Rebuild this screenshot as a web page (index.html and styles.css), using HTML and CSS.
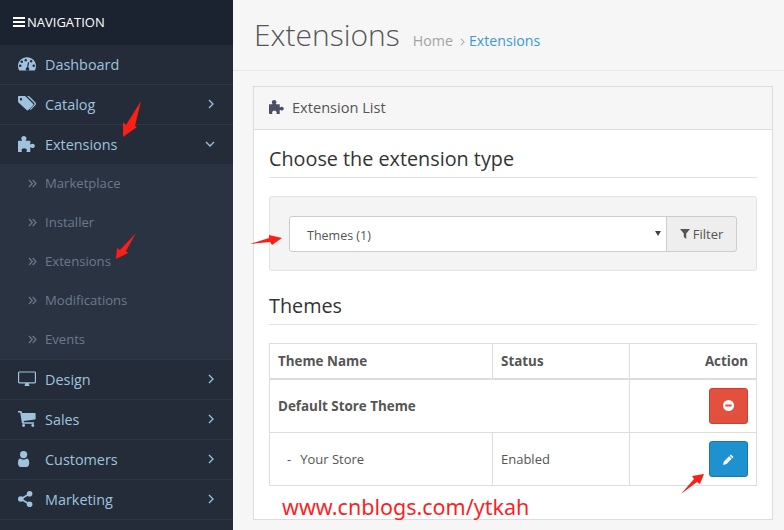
FILE: index.html
```html
<!DOCTYPE html>
<html lang="en">
<head>
  <meta charset="UTF-8">
  <meta name="viewport" content="width=device-width, initial-scale=1.0">
  <title>Extensions</title>
  <link rel="stylesheet" href="styles.css">
</head>
<body>
  <svg class="sprites" width="0" height="0">
    <symbol id="i-dash" viewBox="0 0 24 18"><path fill-rule="evenodd" d="M12 0C5.400 0 0 5.200 0 11.700c0 2.200.6 4.300 1.700 6.100h20.600c1.100-1.800 1.700-3.900 1.700-6.100C24 5.200 18.600 0 12 0zM5 4.200a1.700 1.700 0 1 1 0 3.400 1.700 1.700 0 0 1 0-3.400zM3 9.600a1.700 1.700 0 1 1 0 3.400 1.700 1.700 0 0 1 0-3.400zM10.300 2.200a1.700 1.700 0 1 1 0 3.400 1.700 1.700 0 0 1 0-3.400zM17.500 3.600a1.700 1.700 0 1 1 0 3.400 1.700 1.700 0 0 1 0-3.400zM21 9.600a1.700 1.700 0 1 1 0 3.400 1.700 1.700 0 0 1 0-3.400zM13.300 6.500l1.700.5-1.400 6.300a2.400 2.400 0 1 1-3.200 1.500c.3-.8 1-1.300 1.700-1.500z"/></symbol>
    <symbol id="i-tags" viewBox="0 0 18 16" preserveAspectRatio="xMinYMid"><path fill-rule="evenodd" d="M1 0h5.500c.6 0 1.100.3 1.500.7l7 7c.5.500.5 1.300 0 1.800l-4.600 4.600c-.5.500-1.300.5-1.800 0l-7.900-7.400C.3 6.300 0 5.800 0 5.200V1C0 .4.400 0 1 0zM3 2a1.200 1.200 0 1 0 0 2.400A1.200 1.200 0 0 0 3 2z"/><path d="M9 0h1.200c.5 0 1 .2 1.400.6l5.900 6c.7.7.7 1.800 0 2.500l-4.800 4.900-.8-.8 4.400-4.500c.4-.4.4-1 0-1.400z"/></symbol>
    <symbol id="i-puzzle" viewBox="0 0 16 15" preserveAspectRatio="xMinYMid"><path d="M.5 4.500h2.800c.5 0 .6-.4.300-.8-.3-.4-.6-.8-.6-1.400C3 1 4.200 0 5.500 0S8 1 8 2.300c0 .6-.3 1-.6 1.400-.3.400-.2.8.3.8h3.800v3c0 .5.400.6.800.3.300-.3.700-.5 1.200-.5 1.200 0 2.300.8 2.300 2s-1.100 2-2.300 2c-.5 0-.9-.2-1.200-.5-.4-.3-.8-.2-.8.3V15H8.300c-.4 0-.5-.4-.3-.7.200-.3.300-.6.300-1 0-1.100-1.300-1.800-2.500-1.800s-2.500.7-2.500 1.800c0 .4.100.7.300 1 .2.300.1.700-.3.700H.5c-.3 0-.5-.2-.5-.5V5c0-.3.200-.5.500-.5z"/></symbol>
    <symbol id="i-desktop" viewBox="0 0 26 22"><path fill-rule="evenodd" d="M2 0h22c1.100 0 2 .9 2 2v13.500c0 1.100-.9 2-2 2h-8.500c0 1.200.5 2 1 2.500v1H9.500v-1c.5-.5 1-1.300 1-2.500H2c-1.100 0-2-.9-2-2V2C0 .9.900 0 2 0zM1.700 1.700v14h22.600v-14z"/></symbol>
    <symbol id="i-cart" viewBox="0 0 22 20" preserveAspectRatio="xMinYMid"><path d="M0 0h3.700c.6 0 1 .4 1.100 1l.3 1.500H21c.6 0 1 .4 1 1v6.200c0 .5-.4.900-.9 1L7 12.400l.4 1.600H20v2H6c-.6 0-1-.4-1.100-1L2.800 2H0z"/><circle cx="7" cy="18.200" r="1.800"/><circle cx="18.500" cy="18.200" r="1.800"/></symbol>
    <symbol id="i-user" viewBox="0 0 14 20" preserveAspectRatio="xMinYMid"><circle cx="7" cy="4.500" r="4.500"/><path d="M3 9.500c1 .8 2.500 1.300 4 1.300s3-.5 4-1.300c2 .2 3 1.900 3 5.500 0 3-1.500 5-3.500 5h-7C1.500 20 0 18 0 15c0-3.600 1-5.300 3-5.500z"/></symbol>
    <symbol id="i-share" viewBox="0 0 18 20" preserveAspectRatio="xMinYMid"><circle cx="14.500" cy="3.500" r="3.500"/><circle cx="14.500" cy="16.500" r="3.500"/><circle cx="3.500" cy="10" r="3.500"/><path d="M3 9l11-6.500 1 1.800-11 6.500zM3 11l1-1.800 11 6.500-1 1.800z"/></symbol>
    <symbol id="i-right" viewBox="0 0 6 10"><path d="M1 1l4 4-4 4" fill="none" stroke="currentColor" stroke-width="1.300"/></symbol>
    <symbol id="i-down" viewBox="0 0 10 6"><path d="M1 1l4 4 4-4" fill="none" stroke="currentColor" stroke-width="1.300"/></symbol>
    <symbol id="i-dbl" viewBox="0 0 9 9"><path d="M1 1l3.300 3.500L1 8M4.700 1L8 4.500 4.700 8" fill="none" stroke="currentColor" stroke-width="1.200"/></symbol>
  </svg>

  <div class="app">
    <nav class="sidebar">
      <div class="nav-head">
        <svg class="bars" viewBox="0 0 12 10"><path d="M0 0h12v2H0zM0 4h12v2H0zM0 8h12v2H0z"/></svg>
        <span>NAVIGATION</span>
      </div>
      <a class="nav-item"><svg class="nav-icon"><use href="#i-dash"/></svg><span class="nav-label">Dashboard</span></a>
      <a class="nav-item"><svg class="nav-icon"><use href="#i-tags"/></svg><span class="nav-label">Catalog</span><svg class="caret"><use href="#i-right"/></svg></a>
      <a class="nav-item open"><svg class="nav-icon"><use href="#i-puzzle"/></svg><span class="nav-label">Extensions</span><svg class="caret wide"><use href="#i-down"/></svg></a>
      <div class="submenu">
        <a class="sub-item"><svg class="dbl"><use href="#i-dbl"/></svg>Marketplace</a>
        <a class="sub-item"><svg class="dbl"><use href="#i-dbl"/></svg>Installer</a>
        <a class="sub-item"><svg class="dbl"><use href="#i-dbl"/></svg>Extensions</a>
        <a class="sub-item"><svg class="dbl"><use href="#i-dbl"/></svg>Modifications</a>
        <a class="sub-item"><svg class="dbl"><use href="#i-dbl"/></svg>Events</a>
      </div>
      <a class="nav-item"><svg class="nav-icon"><use href="#i-desktop"/></svg><span class="nav-label">Design</span><svg class="caret"><use href="#i-right"/></svg></a>
      <a class="nav-item"><svg class="nav-icon"><use href="#i-cart"/></svg><span class="nav-label">Sales</span><svg class="caret"><use href="#i-right"/></svg></a>
      <a class="nav-item"><svg class="nav-icon"><use href="#i-user"/></svg><span class="nav-label">Customers</span><svg class="caret"><use href="#i-right"/></svg></a>
      <a class="nav-item"><svg class="nav-icon"><use href="#i-share"/></svg><span class="nav-label">Marketing</span><svg class="caret"><use href="#i-right"/></svg></a>
    </nav>

    <main class="content">
      <header class="page-head">
        <h1>Extensions</h1>
        <span class="crumb">Home</span>
        <svg class="crumb-sep"><use href="#i-right"/></svg>
        <span class="crumb current">Extensions</span>
      </header>

      <section class="panel">
        <div class="panel-head">
          <svg class="panel-icon"><use href="#i-puzzle"/></svg>
          <span>Extension List</span>
        </div>
        <div class="panel-body">
          <h2>Choose the extension type</h2>
          <div class="well">
            <div class="select-wrap">
              <select class="type-select"><option>Themes (1)</option></select>
            </div>
            <button class="filter-btn" type="button">
              <svg class="funnel" viewBox="0 0 12 12"><path d="M0 0h12L7.500 5.500V12L4.500 9.500v-4z"/></svg>Filter
            </button>
          </div>
          <h2 class="second">Themes</h2>
          <table class="themes">
            <thead>
              <tr><th class="col-name">Theme Name</th><th class="col-status">Status</th><th class="right">Action</th></tr>
            </thead>
            <tbody>
              <tr class="row-theme">
                <td colspan="2"><b>Default Store Theme</b></td>
                <td class="right">
                  <button class="btn red" type="button">
                    <svg viewBox="0 0 12 12"><path fill-rule="evenodd" d="M6 0a6 6 0 1 1 0 12A6 6 0 0 1 6 0zM2.500 4.800v2.400h7V4.800z"/></svg>
                  </button>
                </td>
              </tr>
              <tr class="row-store">
                <td><span class="dash">-</span>Your Store</td>
                <td>Enabled</td>
                <td class="right">
                  <button class="btn blue" type="button">
                    <svg viewBox="0 0 12 12"><path d="M8.600.6l2.800 2.800-1.200 1.200-2.800-2.800zM6.700 2.500l2.800 2.800-5.700 5.700L0 12l1-3.800z"/></svg>
                  </button>
                </td>
              </tr>
            </tbody>
          </table>
        </div>
      </section>
    </main>
  </div>

  <!-- annotations drawn over the screenshot -->
  <svg class="marks" viewBox="0 0 784 530">
    <path d="M141 101L135 126 137 127 123 137 123 122 126 125z"/>
    <path d="M136 233L126 251 128 253 116 259 117 248 120 250z"/>
    <path d="M250 244L269 238 269 235 282 238 272 245 270 242z"/>
    <path d="M681 494L694 479 692 476 704 474 700 484 697 482z"/>
  </svg>
  <div class="watermark">www.cnblogs.com/ytkah</div>
</body>
</html>
```

FILE: styles.css
```css
* {
  box-sizing: border-box;
}
html, body {
  height: 100%;
  margin: 0;
  overflow: hidden;
}
body {
  position: relative;
  font-family: "Open Sans", sans-serif;
  font-size: 13px;
  color: #555;
  background: #f6f6f6;
}
.sprites {
  position: absolute;
}
.app {
  display: flex;
  height: 530px;
}

/* sidebar */
.sidebar {
  flex: 0 0 233px;
  background: #232c38;
}
.nav-head {
  display: flex;
  align-items: center;
  height: 45px;
  padding: 0 0 2px 13px;
  background: #1b2230;
  color: #fff;
  font-size: 13px;
}
.nav-head span {
  margin-left: 2px;
}
.bars {
  width: 12px;
  height: 10px;
  fill: #fff;
}
.nav-item {
  display: flex;
  align-items: center;
  height: 40px;
  padding: 0 19px 1px 18px;
  border-bottom: 1px solid #2d3844;
  color: #9fc3df;
  font-size: 14.400px;
}
.nav-item.open {
  height: 39px;
  border-bottom: 0;
}
.nav-icon {
  flex: 0 0 18px;
  width: 18px;
  height: 16px;
  fill: #9fc3df;
}
.nav-label {
  flex: 1;
  margin-left: 9px;
}
.caret {
  width: 6px;
  height: 10px;
  color: #9fc3df;
}
.caret.wide {
  width: 10px;
  height: 6px;
  margin-right: -1px;
}
.submenu {
  background: #2a3342;
  border-bottom: 1px solid #2d3844;
}
.sub-item {
  display: flex;
  align-items: center;
  height: 39px;
  padding: 0 0 2px 28px;
  color: #6a7a8c;
  font-size: 13.100px;
}
.dbl {
  width: 9px;
  height: 9px;
  margin: 2px 8px 0 0;
  color: #6a7a8c;
}

/* content */
.content {
  flex: 1;
  min-width: 0;
}
.page-head {
  display: flex;
  align-items: baseline;
  height: 71px;
  padding: 14px 0 0 21px;
  border-bottom: 1px solid #e6e6e6;
}
.page-head h1 {
  margin: 0 13px 0 0;
  font-size: 30px;
  font-weight: 300;
  color: #555;
}
.crumb {
  font-size: 14.200px;
  color: #a3a3a3;
}
.crumb.current {
  color: #3a9bd5;
}
.crumb-sep {
  width: 5px;
  height: 8px;
  margin: 0 4px 0 7px;
  color: #aaa;
}
.panel {
  margin: 15px 11px 0 20px;
  height: 434px;
  background: #fff;
  border: 1px solid #ddd;
}
.panel-head {
  display: flex;
  align-items: center;
  height: 43px;
  padding: 0 0 2px 15px;
  background: #f6f6f6;
  border-bottom: 1px solid #ddd;
  font-size: 14.600px;
  color: #555;
}
.panel-icon {
  width: 15px;
  height: 14px;
  margin-right: 8px;
  fill: #4a4f63;
}
.panel-body {
  padding: 15px 15px 0;
}
.panel-body h2 {
  margin: 0 0 18px;
  padding-bottom: 5px;
  border-bottom: 1px solid #e2e2e2;
  font-size: 19.800px;
  font-weight: 400;
  line-height: 27px;
  color: #333;
}
.well {
  display: flex;
  height: 75px;
  margin-bottom: 21px;
  padding: 19px 19px;
  background: #f4f4f4;
  border: 1px solid #e3e3e3;
  border-radius: 3px;
}
.select-wrap {
  position: relative;
  flex: 1;
}
.select-wrap::after {
  content: "";
  position: absolute;
  right: 6px;
  top: 15px;
  border-style: solid;
  border-width: 5px 3px 0;
  border-color: #444 transparent transparent;
}
.type-select {
  width: 100%;
  height: 36px;
  padding: 2px 17px 0;
  appearance: none;
  background: #fff;
  border: 1px solid #ccc;
  border-radius: 3px 0 0 3px;
  font-family: inherit;
  font-size: 12.500px;
  color: #555;
}
.filter-btn {
  display: flex;
  align-items: center;
  justify-content: center;
  width: 71px;
  height: 36px;
  margin-left: -1px;
  padding: 0 0 1px;
  background: #eee;
  border: 1px solid #ccc;
  border-radius: 0 3px 3px 0;
  font-family: inherit;
  font-size: 13px;
  color: #555;
}
.funnel {
  width: 10px;
  height: 10px;
  margin-right: 3px;
  fill: #555;
}
.themes {
  width: 100%;
  border-collapse: collapse;
  table-layout: fixed;
}
.themes th, .themes td {
  padding: 0 8px;
  border: 1px solid #ddd;
  text-align: left;
  font-size: 13px;
}
.themes thead th {
  height: 35px;
  padding-top: 1px;
  border-bottom-width: 2px;
  font-size: 13.400px;
  font-weight: 700;
}
.themes b {
  font-size: 13.400px;
}
.col-name {
  width: 223px;
}
.col-status {
  width: 137px;
}
.themes .right {
  text-align: right;
}
.row-theme td {
  height: 54px;
}
.row-store td {
  height: 53px;
}
.dash {
  margin: 0 9px 0 9px;
}
.btn {
  display: inline-flex;
  align-items: center;
  justify-content: center;
  width: 39px;
  height: 36px;
  padding: 0;
  border: 1px solid;
  border-radius: 3px;
  vertical-align: middle;
}
.btn svg {
  width: 11px;
  height: 11px;
  fill: #fff;
}
.btn.red {
  background: #e3503e;
  border-color: #c8402f;
}
.btn.blue {
  background: #1e91cf;
  border-color: #1978ab;
}

/* arrows and watermark pasted on top */
.marks {
  position: absolute;
  left: 0;
  top: 0;
  width: 784px;
  height: 530px;
  fill: #fc1f17;
  pointer-events: none;
}
.watermark {
  position: absolute;
  left: 282px;
  top: 492px;
  font-family: "Noto Sans", sans-serif;
  font-size: 21.500px;
  line-height: 30px;
  color: #fe1f1f;
}
```
